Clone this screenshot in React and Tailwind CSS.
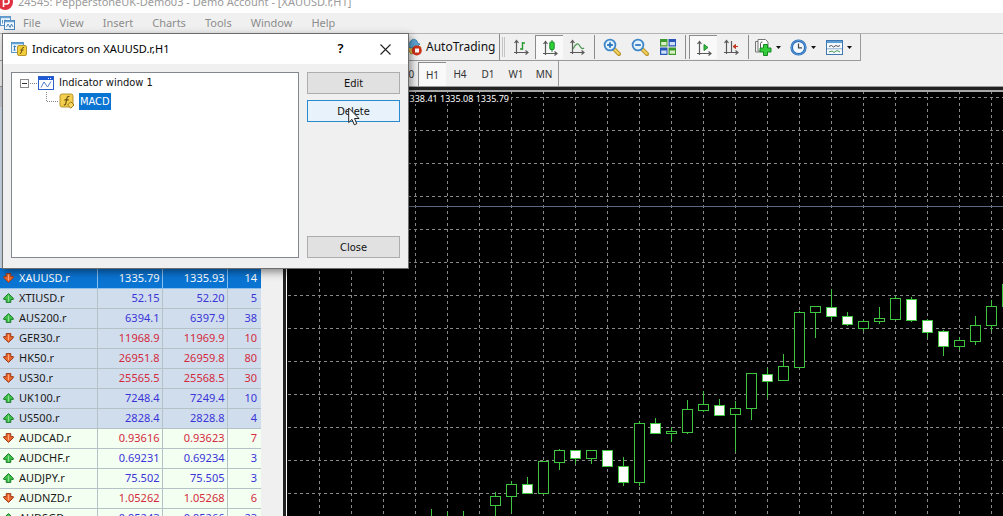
import { useState } from 'react';

const MENU = ['File', 'View', 'Insert', 'Charts', 'Tools', 'Window', 'Help'];
const PERIODS = ['M30', 'H1', 'H4', 'D1', 'W1', 'MN'];

const SYMBOLS = [
  { name: 'XAUUSD.r', bid: '1335.79', ask: '1335.93', spread: 14, dir: 'down', group: 'selected' },
  { name: 'XTIUSD.r', bid: '52.15', ask: '52.20', spread: 5, dir: 'up', group: 'cfd' },
  { name: 'AUS200.r', bid: '6394.1', ask: '6397.9', spread: 38, dir: 'up', group: 'cfd' },
  { name: 'GER30.r', bid: '11968.9', ask: '11969.9', spread: 10, dir: 'down', group: 'cfd' },
  { name: 'HK50.r', bid: '26951.8', ask: '26959.8', spread: 80, dir: 'down', group: 'cfd' },
  { name: 'US30.r', bid: '25565.5', ask: '25568.5', spread: 30, dir: 'down', group: 'cfd' },
  { name: 'UK100.r', bid: '7248.4', ask: '7249.4', spread: 10, dir: 'up', group: 'cfd' },
  { name: 'US500.r', bid: '2828.4', ask: '2828.8', spread: 4, dir: 'up', group: 'cfd' },
  { name: 'AUDCAD.r', bid: '0.93616', ask: '0.93623', spread: 7, dir: 'down', group: 'fx' },
  { name: 'AUDCHF.r', bid: '0.69231', ask: '0.69234', spread: 3, dir: 'up', group: 'fx' },
  { name: 'AUDJPY.r', bid: '75.502', ask: '75.505', spread: 3, dir: 'up', group: 'fx' },
  { name: 'AUDNZD.r', bid: '1.05262', ask: '1.05268', spread: 6, dir: 'down', group: 'fx' },
  { name: 'AUDSGD.r', bid: '0.95243', ask: '0.95266', spread: 23, dir: 'up', group: 'fx' },
];

const ROW_STYLE = {
  selected: 'bg-[#0a74d2]',
  cfd: 'bg-[#d0dded]',
  fx: 'bg-[#f3fff1]',
};

// slot, high, body top, body bottom, low, bearish
const CANDLES = [
  [9, 417, 430, 440, 445, 0],
  [10, 420, 430, 440, 445, 0],
  [11, 419, 430, 440, 445, 0],
  [13, 400, 404, 413, 430, 0],
  [14, 389, 392, 404, 421, 0],
  [15, 385, 392, 401, 401, 1],
  [16, 369, 369, 401, 402, 0],
  [17, 357, 358, 370, 378, 0],
  [18, 358, 358, 366, 372, 1],
  [19, 358, 358, 366, 372, 0],
  [20, 358, 358, 374, 375, 1],
  [21, 365, 374, 390, 394, 1],
  [22, 329, 331, 390, 394, 0],
  [23, 326, 331, 341, 342, 1],
  [24, 335, 339, 341, 350, 0],
  [25, 308, 317, 340, 342, 0],
  [26, 299, 312, 318, 320, 0],
  [27, 307, 313, 323, 324, 1],
  [28, 309, 316, 322, 360, 0],
  [29, 281, 281, 316, 328, 0],
  [30, 276, 282, 289, 306, 1],
  [31, 262, 274, 288, 288, 0],
  [32, 219, 220, 275, 276, 0],
  [33, 214, 214, 220, 246, 0],
  [34, 197, 215, 224, 228, 1],
  [35, 220, 224, 232, 234, 1],
  [36, 228, 229, 236, 239, 0],
  [37, 215, 226, 229, 232, 0],
  [38, 204, 206, 227, 228, 0],
  [39, 205, 207, 228, 230, 1],
  [40, 227, 228, 240, 246, 1],
  [41, 238, 239, 254, 264, 1],
  [42, 245, 248, 254, 258, 0],
  [43, 224, 233, 249, 253, 0],
  [44, 208, 214, 233, 239, 0],
  [45, 190, 192, 214, 220, 0],
];

const range = (n) => Array.from({ length: n }, (_, i) => i);

function TickArrow({ dir }) {
  const up = dir === 'up';
  return (
    <svg width="11" height="10" viewBox="0 0 11 10" className="shrink-0">
      <path
        d="M5.5 .6 L10.3 5.2 V6.4 H7.8 V9.4 H3.2 V6.4 H.7 V5.2 Z"
        transform={up ? undefined : 'rotate(180 5.5 5)'}
        fill={up ? '#3fc04a' : '#ea682e'}
        stroke={up ? '#1c7d2a' : '#9c3a1a'}
      />
      <path d={up ? 'M5.5 2.6V8.5' : 'M5.5 1.5V7.4'} stroke={up ? '#8ee08e' : '#ffab80'} />
    </svg>
  );
}

function Axes({ children }) {
  return (
    <svg width="16" height="16" viewBox="0 0 16 16" fill="none">
      <path d="M3.5 15V2M1.5 4L3.5 1.5L5.5 4M1 13.5H14M12.5 11.5L15 13.5L12.5 15.5" stroke="#5a5a5a" strokeWidth="1.2" />
      {children}
    </svg>
  );
}

function Magnifier({ plus }) {
  return (
    <svg width="18" height="18" viewBox="0 0 18 18" fill="none">
      <path d="M11 11L16 16" stroke="#b8922a" strokeWidth="4" strokeLinecap="round" />
      <path d="M11.5 11.5L15.8 15.8" stroke="#f2d45c" strokeWidth="2" strokeLinecap="round" />
      <circle cx="7" cy="7" r="5.4" fill="#e4f2fd" stroke="#3f86c8" strokeWidth="1.8" />
      <path d={plus ? 'M4.2 7H9.8M7 4.2V9.8' : 'M4.2 7H9.8'} stroke="#2f78c0" strokeWidth="1.8" />
    </svg>
  );
}

function TilesIcon() {
  return (
    <svg width="16" height="16" viewBox="0 0 16 16">
      <path d="M0 0H7.5V7.5H0ZM8.5 8.5H16V16H8.5Z" fill="#3d9a2e" />
      <path d="M8.5 0H16V7.5H8.5ZM0 8.5H7.5V16H0Z" fill="#2a55b8" />
      <path d="M1.2 3H6.5V6.3H1.2ZM9.7 11.5H15V14.8H9.7Z" fill="#d8f0c4" />
      <path d="M9.7 3H15V6.3H9.7ZM1.2 11.5H6.5V14.8H1.2Z" fill="#cfe0fa" />
    </svg>
  );
}

function AddIndicatorIcon() {
  return (
    <svg width="18" height="18" viewBox="0 0 18 18">
      <path d="M4 1.5H11.5L14 4V13H4Z" fill="#fff" stroke="#777" />
      <path d="M1.5 3.5H4M1.5 3.5V14H6" fill="none" stroke="#777" />
      <path d="M6.5 10V5.5Q6.5 4 8.5 4" fill="none" stroke="#555" />
      <path d="M9.5 6.5H13.5V10H17V14H13.5V17.5H9.5V14H6V10H9.5Z" fill="#35cc3c" stroke="#168a22" />
    </svg>
  );
}

function ClockIcon() {
  return (
    <svg width="17" height="17" viewBox="0 0 17 17" fill="none">
      <circle cx="8.5" cy="8.5" r="6.8" fill="#f2f8ff" stroke="#2467b4" strokeWidth="2.6" />
      <circle cx="8.5" cy="8.5" r="7" stroke="#6fb0ea" strokeWidth=".8" />
      <path d="M8.5 4.5V8.8H12" stroke="#444" strokeWidth="1.2" />
    </svg>
  );
}

function TemplateIcon() {
  return (
    <svg width="17" height="15" viewBox="0 0 17 15" fill="none">
      <rect x=".5" y=".5" width="16" height="14" fill="#f4f9fd" stroke="#3f78b0" />
      <path d="M1 2H16" stroke="#5f9fd8" strokeWidth="2" />
      <path d="M3 6.5L5.5 5.5L7.5 7L10 5.5L12 6.5L14 5.5" stroke="#555" />
      <path d="M1 8.8H16" stroke="#8fb0cc" />
      <path d="M3 12L6 11L8 12.5L11 10.5L14 12" stroke="#4b9a55" />
    </svg>
  );
}

function AutoTradingIcon() {
  return (
    <svg width="16" height="18" viewBox="0 0 16 18">
      <path d="M1 9L7 7L15 9L13 14L5 16Z" fill="#e8c04a" stroke="#b08a28" />
      <path d="M0 7Q4 7 4 4Q7 -1 11 3Q11 6 14 6Q12 10 6 10Q2 10 0 7Z" fill="#5da7d6" stroke="#3579a8" strokeWidth=".8" />
      <circle cx="10.8" cy="12.5" r="5" fill="#d03018" />
      <rect x="9" y="10.5" width="4" height="4" fill="#fff" />
    </svg>
  );
}

function FxIcon({ badge }) {
  return (
    <svg width="16" height="16" viewBox="0 0 16 16" fill="none">
      <rect x="1" y="1" width="13" height="13" rx="2" fill="#f3cf4e" stroke="#b8942c" />
      <path d="M10.5 3.5Q8.2 2.8 7.8 5.5L6.8 10.5Q6.4 12.4 4.8 11.8M5.4 6.8H9.8" stroke="#6b5210" strokeWidth="1.2" />
      {badge && <path d="M11.8 8.8L15 12L11.8 15.2L8.6 12Z" fill="#f8d860" stroke="#9a7818" />}
    </svg>
  );
}

function DialogIcon() {
  return (
    <svg width="17" height="16" viewBox="0 0 17 16" fill="none">
      <rect x=".5" y="1.5" width="12" height="10" fill="#eef6fc" stroke="#5f97c4" />
      <path d="M1 2.5H12" stroke="#5fa0d8" strokeWidth="1.5" />
      <path d="M3.5 4.5V9.5M2.5 5.5H5M2.5 9H4.5" stroke="#3c7cb0" />
      <rect x="6.5" y="4.5" width="9" height="10" rx="1.5" fill="#f3cf3c" stroke="#b8942c" />
      <path d="M13 6.5Q11.4 6 11 8L10.4 11Q10 13 8.8 12.4M9.4 9H12.6" stroke="#6b5210" />
    </svg>
  );
}

function WindowIcon() {
  return (
    <svg width="16" height="14" viewBox="0 0 16 14" fill="none">
      <rect x=".5" y=".5" width="15" height="13" fill="#fff" stroke="#2a60c8" />
      <rect x="1" y="1" width="14" height="3" fill="#1d58d6" />
      <path d="M10 2.5H11M12 2.5H13" stroke="#fff" />
      <path d="M3 11.5L6 6L9.5 11L13 5.5" stroke="#4f7fc8" strokeLinejoin="round" />
    </svg>
  );
}

function AppIcon() {
  return (
    <svg width="16" height="16" viewBox="0 0 16 16" fill="none">
      <rect x=".5" y="1.5" width="10" height="9" fill="#f2f8fd" stroke="#5b93c4" />
      <path d="M1 2.5H10" stroke="#6aa5d6" strokeWidth="1.5" />
      <path d="M2.5 5V8.5M5 4.5V8" stroke="#5b93c4" />
      <rect x="4.5" y="5.5" width="10" height="9" fill="#f2f8fd" stroke="#4a86bc" />
      <path d="M5 6.5H14" stroke="#6aa5d6" strokeWidth="1.5" />
      <path d="M6.5 12L8 9L10 12.5L11.5 9L13 12" stroke="#4a86bc" />
    </svg>
  );
}

function Separator() {
  return <div className="mx-[3px] h-6 w-px shrink-0 bg-[#8c8c8c]" />;
}

function ToolButton({ label, active, menu, children }) {
  return (
    <button
      aria-label={label}
      className={`flex h-6 shrink-0 items-center ${menu ? 'w-9 gap-1 pl-0.5' : 'w-7 justify-center'} ${
        active ? 'border-t border-l border-[#8c8c8c] bg-[#f9f9f9]' : ''
      }`}
    >
      {children}
      {menu && <svg width="5" height="3" viewBox="0 0 5 3"><path d="M0 0H5L2.5 3Z" fill="#111" /></svg>}
    </button>
  );
}

function Toolbar() {
  return (
    <div className="flex h-7 items-center border-t border-[#b4b4b4]">
      <div className="flex h-full items-center border-r border-b border-[#9a9a9a]">
        <div className="w-[406px] shrink-0" />
        <button className="flex w-[93px] shrink-0 items-center gap-1 text-[12px] whitespace-nowrap text-[#111]">
          <AutoTradingIcon />
          AutoTrading
        </button>
        <div className="h-full w-px bg-[#8c8c8c]" />
        <div className="mx-0.5 h-5 w-[3px] border-x border-[#c4c4c4]" />
        <ToolButton label="Bar chart">
          <Axes><path d="M9.5 3V11M9.5 4H12M7 10H9.5" stroke="#2c9a34" strokeWidth="1.4" /></Axes>
        </ToolButton>
        <ToolButton label="Candlesticks" active>
          <Axes>
            <path d="M10 0V12" stroke="#1e8a28" />
            <rect x="7.8" y="2" width="4.4" height="7.5" rx="1" fill="#2fd03a" stroke="#1e8a28" />
          </Axes>
        </ToolButton>
        <ToolButton label="Line chart">
          <Axes><path d="M4 10Q8 2 10.5 6.5T15 9" stroke="#4f9a55" strokeWidth="1.3" /></Axes>
        </ToolButton>
        <Separator />
        <ToolButton label="Zoom in"><Magnifier plus /></ToolButton>
        <ToolButton label="Zoom out"><Magnifier /></ToolButton>
        <ToolButton label="Tile windows"><TilesIcon /></ToolButton>
        <Separator />
        <ToolButton label="Auto scroll" active>
          <Axes><path d="M8 4.5V10.5L12 7.5Z" fill="#36c040" stroke="#1e8a28" /></Axes>
        </ToolButton>
        <ToolButton label="Chart shift">
          <Axes>
            <path d="M8.5 2V13" stroke="#5a5a5a" strokeWidth="1.2" />
            <path d="M10 7.5L12.5 5.5V9.5ZM12 7.5H15" fill="#c03820" stroke="#c03820" />
          </Axes>
        </ToolButton>
        <Separator />
        <ToolButton label="Indicators" menu><AddIndicatorIcon /></ToolButton>
        <ToolButton label="Periods" menu><ClockIcon /></ToolButton>
        <ToolButton label="Templates" menu><TemplateIcon /></ToolButton>
      </div>
    </div>
  );
}

function PeriodBar() {
  const [period, setPeriod] = useState('H1');
  return (
    <div className="flex h-[25px] items-stretch">
      <div className="flex items-center border-r border-[#9a9a9a]">
        <div className="w-[390px] shrink-0" />
        {PERIODS.map((p) => (
          <button
            key={p}
            onClick={() => setPeriod(p)}
            className={`h-6 w-7 shrink-0 pt-0.5 text-center text-[10px] text-[#333] ${
              p === period ? 'border-t border-l border-[#8c8c8c] bg-[#f9f9f9]' : ''
            }`}
          >
            {p}
          </button>
        ))}
      </div>
    </div>
  );
}

function MarketWatch() {
  return (
    <div className="w-[283px] shrink-0 overflow-hidden bg-[#f0f0f0]">
      <div className="h-5 bg-[#c9ced6]" />
      <table className="w-[261px] table-fixed border-collapse text-[11px] leading-4">
        <colgroup>
          <col className="w-[97px]" />
          <col className="w-[65px]" />
          <col className="w-[65px]" />
          <col className="w-[34px]" />
        </colgroup>
        <tbody>
          <tr className="h-[161px] bg-[#d0dded]"><td colSpan={4} /></tr>
          {SYMBOLS.map((s) => {
            const selected = s.group === 'selected';
            const price = selected ? 'text-white' : s.dir === 'up' ? 'text-[#3a34d8]' : 'text-[#d42a3c]';
            const line = selected ? 'border-[#8dbfec]' : 'border-[#b4c2c8]';
            return (
              <tr key={s.name} className={`h-5 ${ROW_STYLE[s.group]}`}>
                <td className={`border-r border-b p-0 ${line}`}>
                  <div className={`flex items-center gap-[5px] pl-[3px] ${selected ? 'text-white' : 'text-[#1a1a1a]'}`}>
                    <TickArrow dir={s.dir} />
                    {s.name}
                  </div>
                </td>
                <td className={`border-r border-b p-0 pr-0.5 text-right ${line} ${price}`}>{s.bid}</td>
                <td className={`border-r border-b p-0 pr-0.5 text-right ${line} ${price}`}>{s.ask}</td>
                <td className={`border-b p-0 pr-1 text-right ${line} ${price}`}>{s.spread}</td>
              </tr>
            );
          })}
        </tbody>
      </table>
    </div>
  );
}

function Chart() {
  return (
    <div className="min-w-0 flex-1 border-t-2 border-l border-t-[#a8a8a8] border-l-white bg-black">
      <svg width="100%" height="100%" className="block" fill="none" shapeRendering="crispEdges">
        <g stroke="#8a8a8a" strokeDasharray="3 3">
          {range(60).map((i) => <path key={i} d={`M${i * 32 + 32.5} 0V2000`} strokeDashoffset="1" />)}
          {range(60).map((i) => <path key={i} d={`M0 ${i * 33 + 5.5}H3000`} strokeDashoffset="5" />)}
        </g>
        <path d="M0 114.5H3000" stroke="#5a6b80" />
        <rect x="0" y="1" width="224" height="11" fill="#000" />
        <text x="222" y="10" textAnchor="end" fill="#fff" className="text-[9px]">338.41 1335.08 1335.79</text>
        <g stroke="#3fc43f">
          {CANDLES.map(([slot, high, top, bottom, low, bear]) => (
            <g key={slot}>
              <path d={`M${slot * 16 + 0.5} ${high}V${low}`} />
              <rect x={slot * 16 - 4.5} y={top + 0.5} width="10" height={bottom - top} fill={bear ? '#fff' : '#000'} />
            </g>
          ))}
        </g>
      </svg>
    </div>
  );
}

function Cursor() {
  return (
    <svg width="12" height="19" viewBox="0 0 12 19" className="absolute top-1.5 left-10">
      <path d="M.7 1V15.5L4 12.4L6.3 17.8L8.8 16.7L6.5 11.5H11Z" fill="#fff" stroke="#222" />
    </svg>
  );
}

function DialogButton({ hot, children }) {
  return (
    <button
      className={`relative h-[22px] w-full border pt-0.5 text-[11px] text-[#111] ${
        hot ? 'border-[#2a8ad0] bg-[#e8f2fa]' : 'border-[#adadad] bg-[#e1e1e1]'
      }`}
    >
      {children}
      {hot && <Cursor />}
    </button>
  );
}

function IndicatorsDialog() {
  return (
    <div
      role="dialog"
      aria-labelledby="dialog-title"
      className="absolute top-[33px] left-0.5 flex h-[236px] w-[407px] flex-col border border-[#6e6e6e] bg-[#f0f0f0] shadow-[2px_3px_8px_rgba(0,0,0,0.45)]"
    >
      <div className="flex h-[30px] items-center bg-white pl-2">
        <DialogIcon />
        <h1 id="dialog-title" className="ml-1 flex-1 text-[11px] text-black">Indicators on XAUUSD.r,H1</h1>
        <button aria-label="Help" className="w-[45px] text-[13px] font-semibold text-black">?</button>
        <button aria-label="Close window" className="flex w-[45px] justify-center">
          <svg width="11" height="11" viewBox="0 0 11 11"><path d="M.5 .5L10.5 10.5M10.5 .5L.5 10.5" stroke="#222" strokeWidth="1.1" /></svg>
        </button>
      </div>
      <div className="flex flex-1 gap-2 p-2 pb-2.5 font-['DejaVu_Sans_Condensed','Noto_Sans',sans-serif]">
        <ul className="flex-1 border border-[#828790] bg-white pt-px pl-2 text-[11px] text-[#111]">
          <li className="flex h-[18px] items-center">
            <svg width="18" height="9" viewBox="0 0 18 9" fill="none" shapeRendering="crispEdges">
              <rect x=".5" y=".5" width="8" height="8" fill="#fff" stroke="#8a8a8a" />
              <path d="M2 4.5H7" stroke="#333" />
              <path d="M10 4.5H18" stroke="#888" strokeDasharray="1 1" />
            </svg>
            <WindowIcon />
            <span className="ml-1 px-px">Indicator window 1</span>
          </li>
          <li className="flex h-[18px] items-center pl-[26px]">
            <svg width="12" height="18" viewBox="0 0 12 18" fill="none" className="mr-px" shapeRendering="crispEdges">
              <path d="M.5 0V10M.5 9.5H12" stroke="#888" strokeDasharray="1 1" />
            </svg>
            <FxIcon badge />
            <span className="ml-1 bg-[#0a74d2] px-px leading-[17px] text-white">MACD</span>
          </li>
        </ul>
        <div className="flex w-[93px] flex-col gap-1.5">
          <DialogButton>Edit</DialogButton>
          <DialogButton hot>Delete</DialogButton>
          <div className="mt-auto"><DialogButton>Close</DialogButton></div>
        </div>
      </div>
    </div>
  );
}

export default function App() {
  return (
    <div className="relative flex h-screen flex-col overflow-hidden bg-[#f0f0f0] font-['Noto_Sans','Open_Sans',sans-serif]">
      {/* Title bar */}
      <header className="-mt-2 flex h-[21px] shrink-0 items-center bg-white text-[11px] whitespace-nowrap text-[#9a9a9a]">
        <svg width="13" height="16" viewBox="0 0 13 16" className="mr-[5px] shrink-0">
          <circle cx="5" cy="7" r="8" fill="#e03040" />
          <path d="M3.5 12V4H6.5A2.5 2.5 0 0 1 6.5 9H3.5" fill="none" stroke="#fff" strokeWidth="1.6" />
        </svg>
        24545: PepperstoneUK-Demo03 - Demo Account - [XAUUSD.r,H1]
      </header>

      {/* Menu */}
      <nav className="flex h-5 shrink-0 items-center text-[11px] text-[#8c8c8c]">
        <AppIcon />
        <div className="ml-[7px] flex gap-[19px]">
          {MENU.map((m) => <button key={m}>{m}</button>)}
        </div>
      </nav>

      <div className="shrink-0">
        <Toolbar />
        <PeriodBar />
      </div>

      {/* Workspace */}
      <main className="flex min-h-0 flex-1 border-t border-[#9a9a9a]">
        <MarketWatch />
        <div className="flex min-w-0 flex-1 border-t-3 border-l-3 border-[#222]">
          <Chart />
        </div>
      </main>

      <IndicatorsDialog />
    </div>
  );
}
